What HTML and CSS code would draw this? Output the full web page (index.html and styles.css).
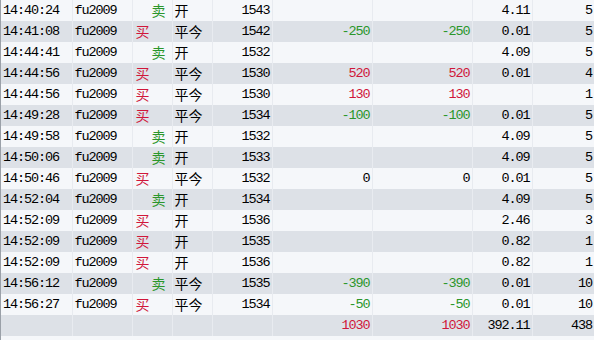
FILE: index.html
```html
<!DOCTYPE html>
<html lang="zh-CN">
<head>
  <meta charset="UTF-8" />
  <title>成交记录</title>
  <link rel="stylesheet" href="styles.css">
</head>
<body>
  <div class="grid">
    <table id="tradeTable">
      <colgroup>
        <col class="c-time"><col class="c-code"><col class="c-side"><col class="c-open">
        <col class="c-price"><col class="c-pnl"><col class="c-pnl"><col class="c-fee"><col class="c-vol">
      </colgroup>
      <tbody>
        <tr><td>14:40:24</td><td>fu2009</td><td class="cn"><span class="sell">卖</span></td><td class="cn">开</td><td class="num">1543</td><td></td><td></td><td class="num">4.11</td><td class="num">5</td></tr>
        <tr><td>14:41:08</td><td>fu2009</td><td class="cn"><span class="buy">买</span></td><td class="cn">平今</td><td class="num">1542</td><td class="num down">-250</td><td class="num down">-250</td><td class="num">0.01</td><td class="num">5</td></tr>
        <tr><td>14:44:41</td><td>fu2009</td><td class="cn"><span class="sell">卖</span></td><td class="cn">开</td><td class="num">1532</td><td></td><td></td><td class="num">4.09</td><td class="num">5</td></tr>
        <tr><td>14:44:56</td><td>fu2009</td><td class="cn"><span class="buy">买</span></td><td class="cn">平今</td><td class="num">1530</td><td class="num up">520</td><td class="num up">520</td><td class="num">0.01</td><td class="num">4</td></tr>
        <tr><td>14:44:56</td><td>fu2009</td><td class="cn"><span class="buy">买</span></td><td class="cn">平今</td><td class="num">1530</td><td class="num up">130</td><td class="num up">130</td><td class="num"></td><td class="num">1</td></tr>
        <tr><td>14:49:28</td><td>fu2009</td><td class="cn"><span class="buy">买</span></td><td class="cn">平今</td><td class="num">1534</td><td class="num down">-100</td><td class="num down">-100</td><td class="num">0.01</td><td class="num">5</td></tr>
        <tr><td>14:49:58</td><td>fu2009</td><td class="cn"><span class="sell">卖</span></td><td class="cn">开</td><td class="num">1532</td><td></td><td></td><td class="num">4.09</td><td class="num">5</td></tr>
        <tr><td>14:50:06</td><td>fu2009</td><td class="cn"><span class="sell">卖</span></td><td class="cn">开</td><td class="num">1533</td><td></td><td></td><td class="num">4.09</td><td class="num">5</td></tr>
        <tr><td>14:50:46</td><td>fu2009</td><td class="cn"><span class="buy">买</span></td><td class="cn">平今</td><td class="num">1532</td><td class="num">0</td><td class="num">0</td><td class="num">0.01</td><td class="num">5</td></tr>
        <tr><td>14:52:04</td><td>fu2009</td><td class="cn"><span class="sell">卖</span></td><td class="cn">开</td><td class="num">1534</td><td></td><td></td><td class="num">4.09</td><td class="num">5</td></tr>
        <tr><td>14:52:09</td><td>fu2009</td><td class="cn"><span class="buy">买</span></td><td class="cn">开</td><td class="num">1536</td><td></td><td></td><td class="num">2.46</td><td class="num">3</td></tr>
        <tr><td>14:52:09</td><td>fu2009</td><td class="cn"><span class="buy">买</span></td><td class="cn">开</td><td class="num">1535</td><td></td><td></td><td class="num">0.82</td><td class="num">1</td></tr>
        <tr><td>14:52:09</td><td>fu2009</td><td class="cn"><span class="buy">买</span></td><td class="cn">开</td><td class="num">1536</td><td></td><td></td><td class="num">0.82</td><td class="num">1</td></tr>
        <tr><td>14:56:12</td><td>fu2009</td><td class="cn"><span class="sell">卖</span></td><td class="cn">平今</td><td class="num">1535</td><td class="num down">-390</td><td class="num down">-390</td><td class="num">0.01</td><td class="num">10</td></tr>
        <tr><td>14:56:27</td><td>fu2009</td><td class="cn"><span class="buy">买</span></td><td class="cn">平今</td><td class="num">1534</td><td class="num down">-50</td><td class="num down">-50</td><td class="num">0.01</td><td class="num">10</td></tr>
        <tr class="total"><td></td><td></td><td></td><td></td><td></td><td class="num up">1030</td><td class="num up">1030</td><td class="num">392.11</td><td class="num">438</td></tr>
      </tbody>
    </table>
  </div>
</body>
</html>
```

FILE: styles.css
```css
body {
  margin: 0;
  background-color: #f5f7fa;
  font-family: 'Liberation Mono', 'Noto Sans CJK SC', monospace;
  font-size: 13.5px;
  letter-spacing: -1.1px;
  color: #000;
}

.grid {
  border-left: 1px solid #9aa0a8;
  height: 340px;
}

table {
  width: 593px;
  border-collapse: collapse;
  table-layout: fixed;
}

.c-time { width: 71px; }
.c-code { width: 60px; }
.c-side { width: 40px; }
.c-open { width: 40px; }
.c-price { width: 60px; }
.c-pnl { width: 100px; }
.c-fee { width: 60px; }
.c-vol { width: 62px; }

tr {
  height: 21px;
  background-color: #f5f7fa;
}

tr:nth-child(even) {
  background-color: #dde1e7;
}

td {
  padding: 0 2px;
  border-right: 1px solid #e8ebf0;
  white-space: nowrap;
  overflow: hidden;
  line-height: 21px;
}

td:last-child {
  border-right: none;
}

.num {
  text-align: right;
}

.cn {
  font-family: 'Noto Sans CJK SC', sans-serif;
  font-size: 14px;
  letter-spacing: 0;
}

.buy {
  color: #d0173a;
  padding-left: 1px;
}

.sell {
  color: #2b962b;
  padding-left: 17px;
}

.up {
  color: #d0173a;
}

.down {
  color: #2b962b;
}
```
